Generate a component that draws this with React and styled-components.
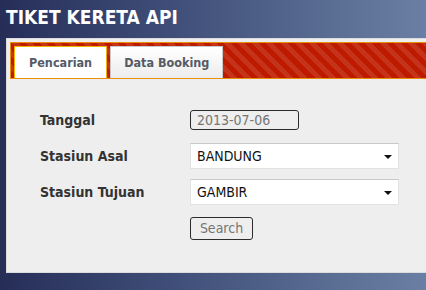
import React from "react";
import styled, { createGlobalStyle } from "styled-components";

const GlobalStyle = createGlobalStyle`
  html, body {
    margin: 0;
    padding: 0;
  }
  body {
    width: 426px;
    height: 290px;
    overflow: hidden;
    background: linear-gradient(to right, #262e58 0%, #3f4e78 40%, #6a7fa3 100%);
    font-family: "DejaVu Sans Condensed", "DejaVu Sans", sans-serif;
  }
`;

const Page = styled.div`
  padding-top: 4px;
`;

const Title = styled.h1`
  margin: 0 0 0 6px;
  height: 34px;
  line-height: 26px;
  font-size: 19px;
  font-weight: bold;
  color: #ffffff;
`;

const Panel = styled.div`
  margin-left: 6px;
  width: 440px;
  height: 227px;
  padding: 3px;
  background: #eeeeee;
  border: 1px solid #dcdcdc;
`;

const TabBar = styled.div`
  display: flex;
  align-items: flex-end;
  gap: 3px;
  height: 37px;
  padding: 3px 0 0 3px;
  box-sizing: border-box;
  border: 1px solid #e8900e;
  background: repeating-linear-gradient(
    45deg,
    #bd1a00 0 5px,
    #c6331b 5px 10px
  );
`;

const Tab = styled.div`
  display: flex;
  align-items: center;
  justify-content: center;
  height: 100%;
  box-sizing: border-box;
  padding: 0 ${(p) => (p.$active ? 14 : 13)}px;
  font-size: 12.5px;
  font-weight: bold;
  color: #555a66;
  background: ${(p) =>
    p.$active ? "#ffffff" : "linear-gradient(#ffffff, #ececec)"};
  border: 1px solid ${(p) => (p.$active ? "#f2b200" : "#c8c8c8")};
  border-bottom: none;
`;

const Form = styled.div`
  display: grid;
  grid-template-columns: 150px 209px;
  grid-auto-rows: 26px;
  row-gap: 10px;
  padding: 28px 0 0 30px;
`;

const Label = styled.label`
  display: flex;
  align-items: center;
  font-size: 14px;
  font-weight: bold;
  color: #333333;
`;

const Cell = styled.div`
  display: flex;
  align-items: center;
`;

const DateInput = styled.div`
  width: 109px;
  height: 20px;
  box-sizing: border-box;
  padding-left: 6px;
  display: flex;
  align-items: center;
  border: 1px solid #2c2c2c;
  border-radius: 3px;
  font-size: 14px;
  color: #757575;
`;

const Select = styled.div`
  position: relative;
  width: 209px;
  height: 26px;
  box-sizing: border-box;
  padding-left: 6px;
  display: flex;
  align-items: center;
  background: #ffffff;
  border: 1px solid #e2e2e2;
  border-top-color: #c9c9c9;
  font-size: 14px;
  color: #111111;
`;

const Arrow = styled.span`
  position: absolute;
  right: 6px;
  top: 11px;
  width: 0;
  height: 0;
  border-left: 4px solid transparent;
  border-right: 4px solid transparent;
  border-top: 4px solid #111111;
`;

const Button = styled.div`
  width: 63px;
  height: 23px;
  box-sizing: border-box;
  display: flex;
  align-items: center;
  justify-content: center;
  border: 1px solid #2c2c2c;
  border-radius: 3px;
  font-size: 14px;
  color: #757575;
`;

export default function App() {
  return (
    <Page>
      <GlobalStyle />
      <Title>TIKET KERETA API</Title>
      <Panel>
        <TabBar>
          <Tab $active>Pencarian</Tab>
          <Tab>Data Booking</Tab>
        </TabBar>
        <Form>
          <Label>Tanggal</Label>
          <Cell>
            <DateInput>2013-07-06</DateInput>
          </Cell>
          <Label>Stasiun Asal</Label>
          <Cell>
            <Select>
              BANDUNG
              <Arrow />
            </Select>
          </Cell>
          <Label>Stasiun Tujuan</Label>
          <Cell>
            <Select>
              GAMBIR
              <Arrow />
            </Select>
          </Cell>
          <span />
          <Cell>
            <Button>Search</Button>
          </Cell>
        </Form>
      </Panel>
    </Page>
  );
}
